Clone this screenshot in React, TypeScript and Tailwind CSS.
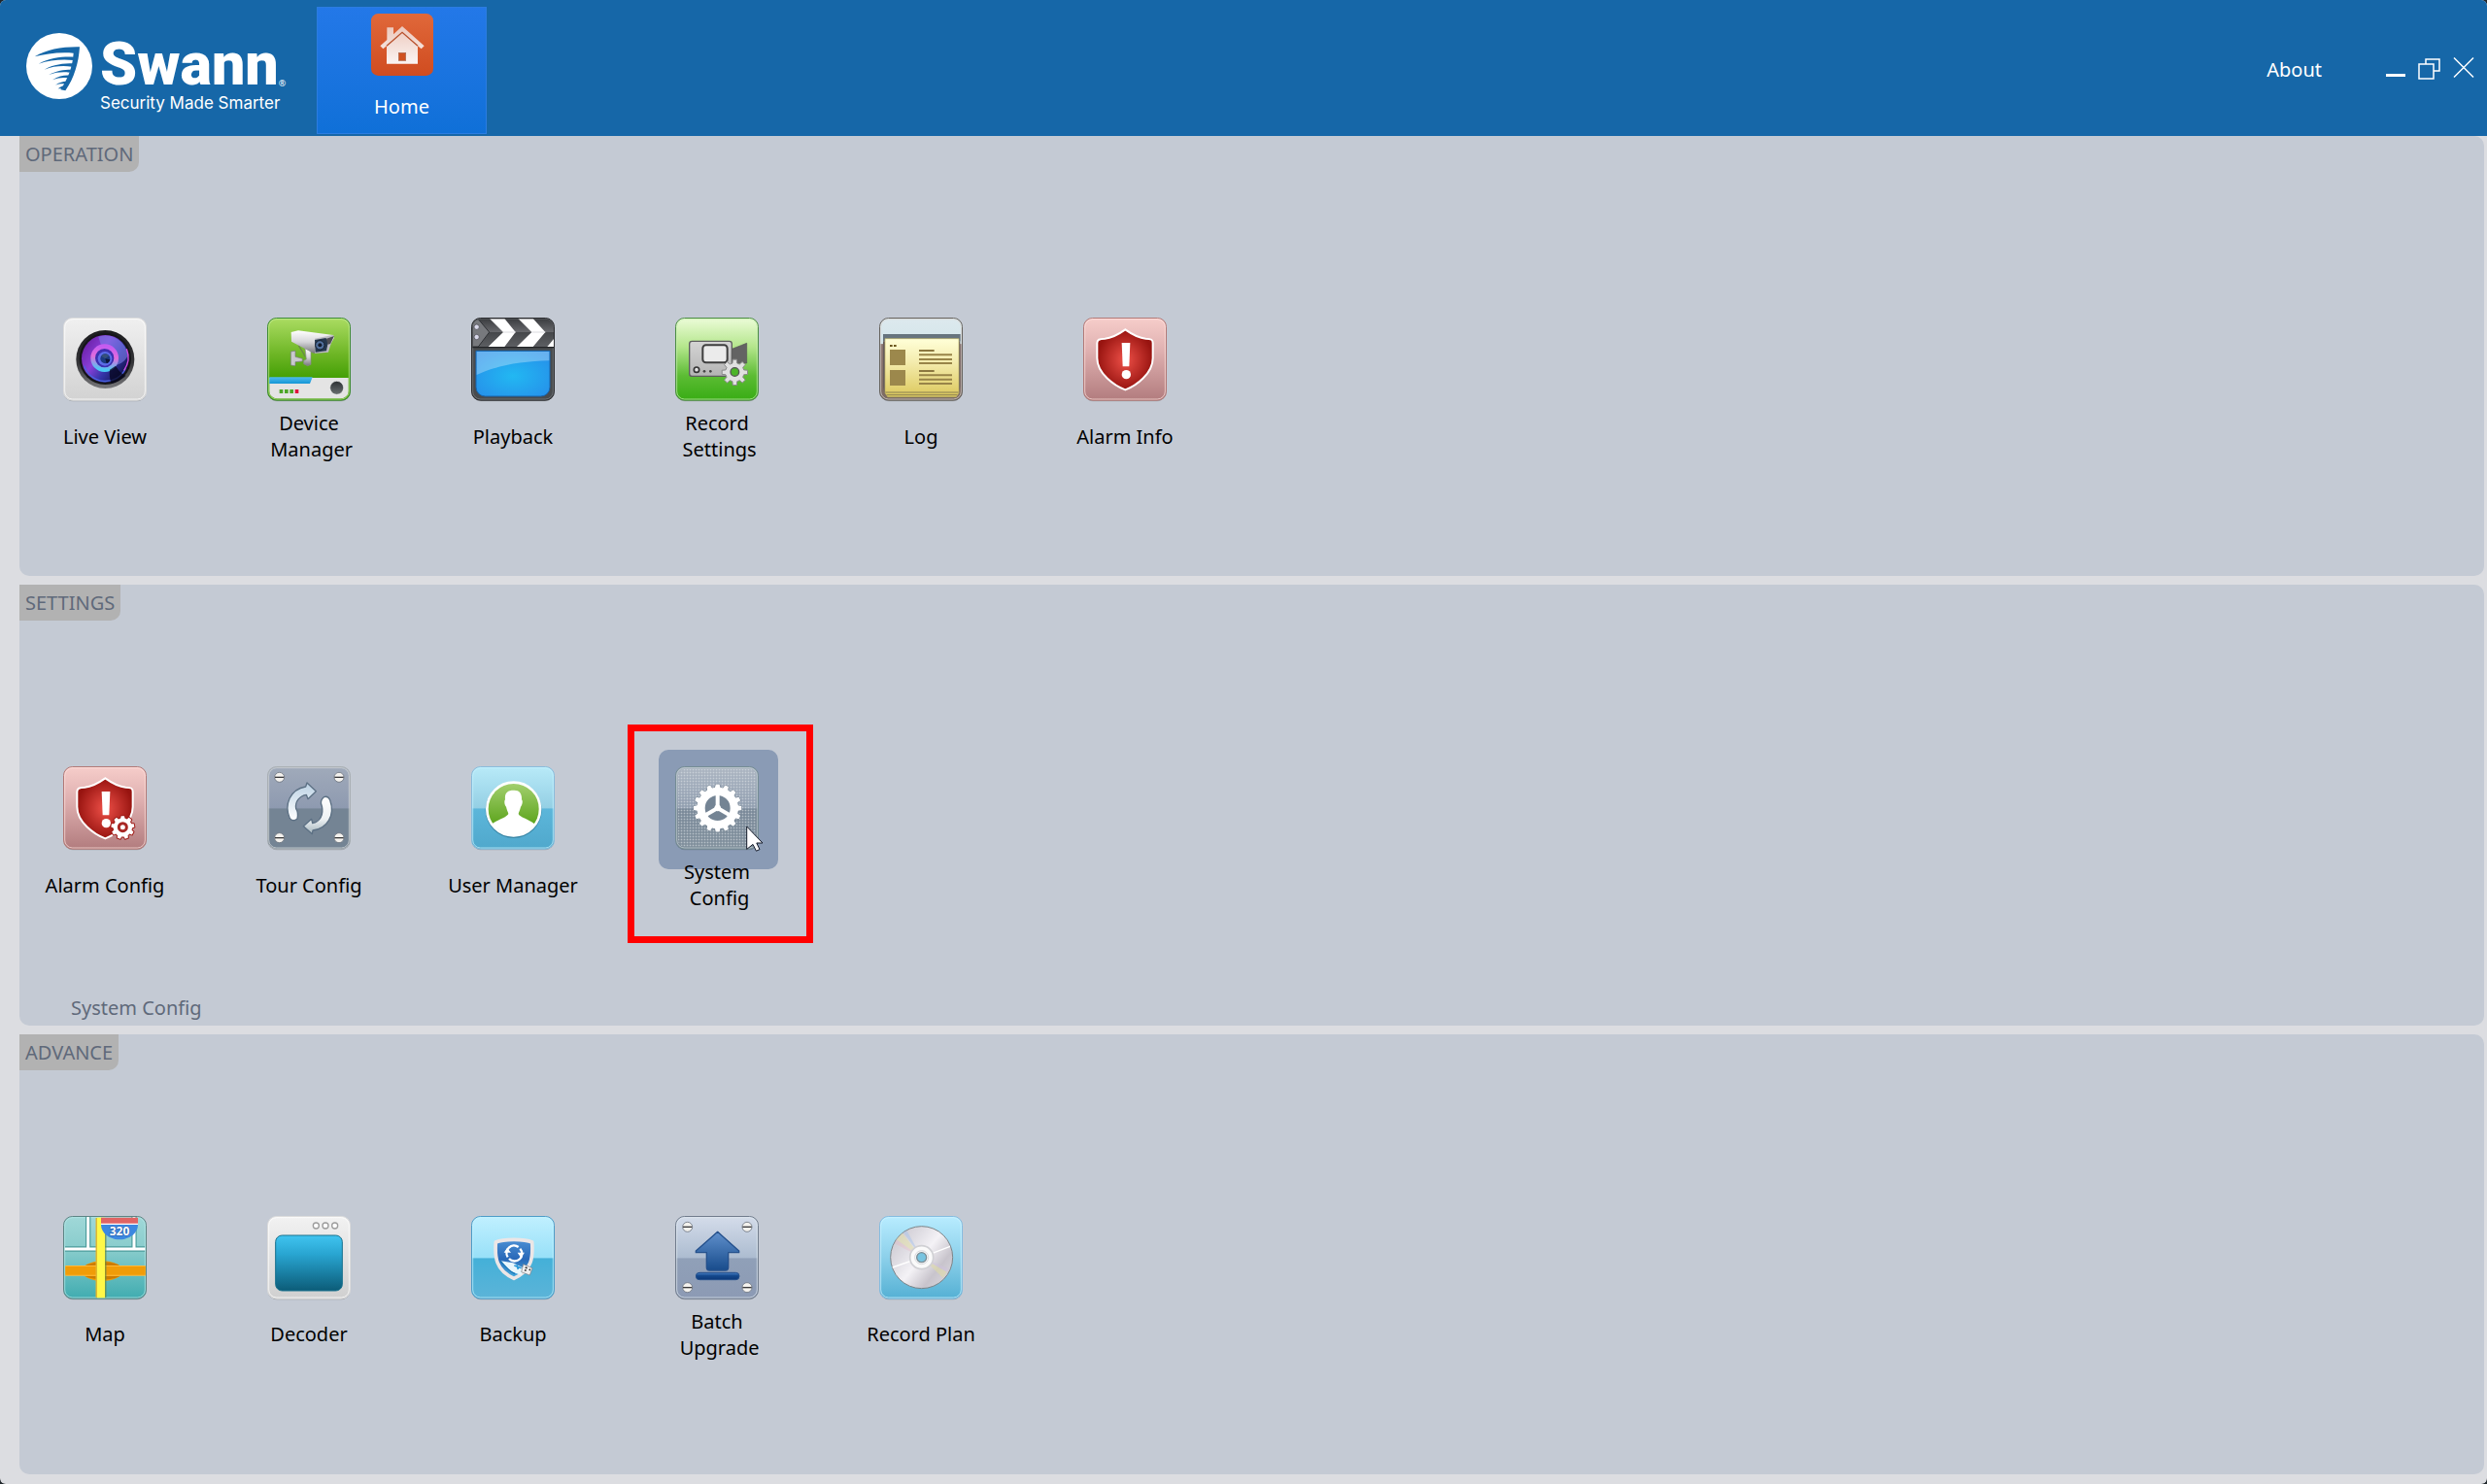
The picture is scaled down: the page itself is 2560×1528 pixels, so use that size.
import React from "react";

type IconProps = { children: React.ReactNode };

/* Every launcher icon is drawn on a 264-unit square canvas. */
function Icon({ children }: IconProps) {
  return (
    <svg viewBox="0 0 264 264" className="relative size-22 shrink-0" aria-hidden="true">
      {children}
    </svg>
  );
}

function Stops({ id, colors, radial }: { id: string; colors: [number, string][]; radial?: boolean }) {
  const stops = colors.map(([o, c], i) => <stop key={i} offset={o} stopColor={c} />);
  return radial ? (
    <radialGradient id={id}>{stops}</radialGradient>
  ) : (
    <linearGradient id={id} x1="0" y1="0" x2="0" y2="1">
      {stops}
    </linearGradient>
  );
}

function Plate({ fill, edge, rim = "#ffffff" }: { fill: string; edge: string; rim?: string }) {
  return (
    <>
      <rect x="5" y="8" width="254" height="254" rx="28" fill="#000" opacity="0.18" />
      <rect x="4.5" y="4.5" width="255" height="254" rx="27" fill={fill} stroke={edge} strokeWidth="3" />
      <rect x="8" y="8" width="248" height="247" rx="24" fill="none" stroke={rim} strokeWidth="3" opacity="0.7" />
    </>
  );
}

function gearPath(cx: number, cy: number, teeth: number, outer: number, inner: number, w = 0.26) {
  const pts: string[] = [];
  const step = (Math.PI * 2) / teeth;
  const at = (a: number, r: number) => `${(cx + r * Math.sin(a)).toFixed(1)} ${(cy - r * Math.cos(a)).toFixed(1)}`;
  for (let i = 0; i < teeth; i++) {
    const a = i * step;
    pts.push(at(a - step * (w + 0.06), inner), at(a - step * (w - 0.06), outer), at(a + step * (w - 0.06), outer), at(a + step * (w + 0.06), inner));
  }
  return `M${pts.join("L")}Z`;
}

function Screws() {
  return (
    <>
      {[[41, 37], [225, 37], [41, 224], [225, 224]].map(([x, y]) => (
        <g key={`${x}-${y}`}>
          <circle cx={x} cy={y} r="15" fill="#f4f2ee" stroke="#6d7580" strokeWidth="2.5" />
          <path d={`M${x - 14} ${y}h28`} stroke="#3c3c3e" strokeWidth="4" />
        </g>
      ))}
    </>
  );
}

function LiveViewIcon() {
  return (
    <Icon>
      <defs>
        <Stops id="lvPlate" colors={[[0, "#f0f0f0"], [1, "#d2d2d2"]]} />
        <Stops id="lvRing" colors={[[0, "#1c1c1e"], [0.55, "#333336"], [1, "#77777a"]]} />
        <linearGradient id="lvGlass" x1="0" y1="0.2" x2="1" y2="0.9">
          <stop offset="0" stopColor="#6a1fa6" />
          <stop offset="0.35" stopColor="#8a3fd8" />
          <stop offset="0.6" stopColor="#3334a8" />
          <stop offset="1" stopColor="#0a0a30" />
        </linearGradient>
        <linearGradient id="lvIris" x1="0.5" y1="0" x2="0.4" y2="1">
          <stop offset="0" stopColor="#c45cf0" />
          <stop offset="0.45" stopColor="#e26bdc" />
          <stop offset="1" stopColor="#4cc8f4" />
        </linearGradient>
      </defs>
      <Plate fill="url(#lvPlate)" edge="#dddddd" />
      <circle cx="133" cy="132" r="90" fill="url(#lvRing)" />
      <circle cx="133" cy="130" r="80" fill="#151519" />
      <circle cx="133" cy="130" r="73" fill="url(#lvGlass)" />
      <path d="M112 62c40-14 82 12 92 56-10 26-40 40-66 30z" fill="#7c7ee8" opacity="0.6" />
      <path d="M68 152a69 69 0 0 0 128 8" fill="none" stroke="#4a62e0" strokeWidth="4" />
      <path d="M199 100a70 70 0 0 1-8 66" fill="none" stroke="#d44ce0" strokeWidth="4" />
      <circle cx="131" cy="128" r="36" fill="#3c2fb0" stroke="url(#lvIris)" strokeWidth="14" />
      <path d="M165 152c12 18 20 26 32 30-12 12-30 22-46 24-4-16-6-28-4-42z" fill="#05061c" opacity="0.75" />
      <circle cx="132" cy="130" r="22" fill="#5c6ce8" />
      <circle cx="133" cy="130" r="15" fill="#1c3a80" />
      <path d="M133 130l-12-8a15 15 0 0 1 24-1z" fill="#35507a" />
      <path d="M133 130l4 15a15 15 0 0 0 11-12z" fill="#0b1438" />
    </Icon>
  );
}

function DeviceManagerIcon() {
  return (
    <Icon>
      <defs>
        <Stops id="dmPlate" colors={[[0, "#abdc62"], [0.45, "#6cb524"], [0.72, "#45a006"], [1, "#3f9808"]]} />
        <Stops id="dmBody" colors={[[0, "#ffffff"], [0.5, "#d6d6da"], [1, "#77777c"]]} />
        <Stops id="dmBar" colors={[[0, "#4dbbec"], [1, "#1596d6"]]} />
        <Stops id="dmKnob" colors={[[0, "#2c3032"], [1, "#6b7072"]]} />
      </defs>
      <Plate fill="url(#dmPlate)" edge="#3f8c34" rim="#c4ec98" />
      <path d="M10 189h244v41a23 23 0 0 1-23 23H33a23 23 0 0 1-23-23z" fill="#e4e4e4" />
      <path d="M10 187h133l-8 20H10z" fill="url(#dmBar)" />
      <rect x="41" y="225" width="11" height="12" fill="#4da628" />
      <rect x="57" y="225" width="11" height="12" fill="#4da628" />
      <rect x="73" y="225" width="11" height="12" fill="#4da628" />
      <rect x="89" y="225" width="11" height="12" fill="#e0143c" />
      <circle cx="218" cy="220" r="21" fill="url(#dmKnob)" stroke="#f8f8f8" strokeWidth="2" />
      <path d="M100 88c8 16 16 24 20 36" fill="none" stroke="#6a8a48" strokeWidth="4" />
      <path d="M76 108l14-2v18l22 6v8l-22 2v12l-14-2z" fill="#c9c9ce" stroke="#77777c" strokeWidth="2" />
      <path d="M120 98l18 8v42l-10 4-12-6v-10l8-4z" fill="url(#dmBody)" stroke="#88888c" strokeWidth="2" />
      <path d="M77 48l22-5 108 14 3 8-12 22-12 24-40 2-68-36z" fill="url(#dmBody)" />
      <path d="M150 68l58-12-16 54-42 3z" fill="#bcbcc2" />
      <path d="M150 72l34-6 8 10-6 30-34 4z" fill="#26384e" />
      <circle cx="166" cy="88" r="14" fill="#51709c" stroke="#15202e" strokeWidth="3" />
      <circle cx="166" cy="88" r="6" fill="#131c2c" />
      <path d="M186 68l24-8-12 24-8 2z" fill="#4e4e54" />
    </Icon>
  );
}

function PlaybackIcon() {
  return (
    <Icon>
      <defs>
        <radialGradient id="pbScreen" cx="0.5" cy="0.55" r="0.65">
          <stop offset="0" stopColor="#22b8f2" />
          <stop offset="1" stopColor="#2690ea" />
        </radialGradient>
        <Stops id="pbTop" colors={[[0, "#3a3c3f"], [0.48, "#68696d"], [0.5, "#46484b"], [1, "#5c5e62"]]} />
        <clipPath id="pbClip">
          <path d="M7 34A27 27 0 0 1 34 7h197a27 27 0 0 1 27 27v59H7z" />
        </clipPath>
      </defs>
      <Plate fill="#484b4e" edge="#2b2c2f" rim="#7a7d80" />
      <g clipPath="url(#pbClip)">
        <rect x="7" y="6" width="252" height="87" fill="url(#pbTop)" />
        <path d="M7 8h18l34 40-34 45H7z" fill="#77797d" stroke="#303236" strokeWidth="3" />
        <path d="M60 6h46l34 42-34 45H56l46-45z" fill="#fff" />
        <path d="M148 6h46l38 42-38 45h-50l46-45z" fill="#fff" />
        <path d="M238 93l22-26v26z" fill="#fff" />
        <path d="M102 48h38M190 48h42" stroke="#dcdce0" strokeWidth="3" />
      </g>
      <circle cx="20" cy="32" r="8" fill="#d8d8ea" stroke="#3c3d42" strokeWidth="2" />
      <circle cx="20" cy="63" r="8" fill="#d8d8ea" stroke="#3c3d42" strokeWidth="2" />
      <path d="M7 95h251" stroke="#232528" strokeWidth="4" />
      <path d="M18 106h228v112a28 28 0 0 1-28 28H46a28 28 0 0 1-28-28z" fill="url(#pbScreen)" stroke="#1767b0" strokeWidth="3" />
      <path d="M20 108h224v28C160 138 84 150 20 180z" fill="#fff" opacity="0.3" />
    </Icon>
  );
}

function RecordSettingsIcon() {
  return (
    <Icon>
      <defs>
        <Stops id="rsPlate" colors={[[0, "#ecfcd8"], [0.35, "#b4e68c"], [0.7, "#5cbc34"], [1, "#38ac14"]]} />
        <Stops id="rsBody" colors={[[0, "#d4d4d4"], [1, "#b4b4b4"]]} />
      </defs>
      <Plate fill="url(#rsPlate)" edge="#4c8c44" rim="#c8f0b0" />
      <path d="M178 100l46-18v62h-46z" fill="#636363" stroke="#555" strokeWidth="2" />
      <rect x="47" y="76" width="131" height="108" rx="8" fill="url(#rsBody)" stroke="#5e5e5e" strokeWidth="4" />
      <rect x="88" y="88" width="76" height="54" rx="10" fill="#ebebeb" stroke="#3e3e3e" strokeWidth="6" />
      <circle cx="69" cy="164" r="8" fill="#e4e4e4" stroke="#333" strokeWidth="5" />
      <circle cx="93" cy="169" r="4" fill="#444" />
      <circle cx="112" cy="169" r="4" fill="#444" />
      <path d={gearPath(187, 172, 8, 40, 29)} fill="#e0e0e0" stroke="#8a8a8a" strokeWidth="3" strokeLinejoin="round" />
      <circle cx="187" cy="171" r="13" fill="#4cb428" stroke="#555" strokeWidth="4" />
    </Icon>
  );
}

function LogIcon() {
  return (
    <Icon>
      <defs>
        <Stops id="lgPaper" colors={[[0, "#ffffd8"], [0.4, "#f4ecae"], [1, "#dcc85c"]]} />
        <Stops id="lgBack" colors={[[0, "#dde9ee"], [0.31, "#d4e6ea"], [0.32, "#8a7470"], [1, "#7c6a62"]]} />
      </defs>
      <Plate fill="url(#lgBack)" edge="#67645f" rim="#d8d4d0" />
      <rect x="15" y="54" width="239" height="22" fill="#67747e" />
      <path d="M15 76v140c2 16 8 28 14 34h208c8-6 14-16 16-34V76z" fill="#665c5c" />
      <path d="M21 68h228v168l-8 12H29l-8-12z" fill="url(#lgPaper)" stroke="#b8ac64" strokeWidth="2" />
      <path d="M22 234h226M26 242h218" stroke="#8a7f50" strokeWidth="3" />
      <rect x="36" y="87" width="8" height="6" fill="#6c5820" />
      <rect x="48" y="87" width="8" height="6" fill="#6c5820" />
      <rect x="36" y="102" width="48" height="48" fill="#9c884c" />
      <rect x="36" y="165" width="48" height="48" fill="#9c884c" />
      <path d="M126 105h47M126 168h47" stroke="#8c7840" strokeWidth="6" />
      <path d="M126 118h102M126 132h102M126 144h102M126 181h102M126 194h102M126 207h102" stroke="#988448" strokeWidth="6" />
    </Icon>
  );
}

function Shield({ id }: { id: string }) {
  return (
    <>
      <defs>
        <Stops id={`${id}Plate`} colors={[[0, "#f6cdca"], [0.4, "#dfb0b0"], [1, "#b27c7e"]]} />
        <Stops id={`${id}Fill`} radial colors={[[0, "#ee5048"], [1, "#981410"]]} />
      </defs>
      <Plate fill={`url(#${id}Plate)`} edge="#b27876" rim="#ffe4e0" />
      <path
        d="M133 40C150 52 174 66 196 68C214 69 218 71 218 82V128C218 176 166 214 133 226C100 214 46 176 46 128V82C46 71 52 69 70 68C92 66 116 52 133 40Z"
        fill={`url(#${id}Fill)`}
        stroke="#fff"
        strokeWidth="6"
      />
      <path d="M122 81h26l-3 73h-20z" fill="#fff" />
      <circle cx="136" cy="179" r="14" fill="#fff" />
    </>
  );
}

function AlarmInfoIcon() {
  return (
    <Icon>
      <Shield id="ai" />
    </Icon>
  );
}

function AlarmConfigIcon() {
  return (
    <Icon>
      <Shield id="ac" />
      <path d={gearPath(187, 192, 9, 36, 29)} fill="#fff" stroke="#a01c18" strokeWidth="6" paintOrder="stroke" strokeLinejoin="round" />
      <circle cx="187" cy="191" r="12" fill="#fff" stroke="#a82824" strokeWidth="9" />
    </Icon>
  );
}

function SplitPlateDefs({ id, c }: { id: string; c: [string, string, string, string] }) {
  return <Stops id={id} colors={[[0, c[0]], [0.505, c[1]], [0.51, c[2]], [1, c[3]]]} />;
}

function TourConfigIcon() {
  return (
    <Icon>
      <defs>
        <SplitPlateDefs id="tcPlate" c={["#a0aaba", "#8e9ab0", "#748494", "#748494"]} />
        <Stops id="tcA" colors={[[0, "#bcd2e4"], [1, "#ffffff"]]} />
        <Stops id="tcB" colors={[[0, "#ffffff"], [0.6, "#eef2f4"], [1, "#a4b4bc"]]} />
      </defs>
      <Plate fill="url(#tcPlate)" edge="#aab0b4" rim="#d8dcdc" />
      <Screws />
      <path
        d="M126 54L154 80L129 104L124 91C104 94 88 112 92 134C98 142 99 151 96 165C88 172 78 172 73 164C54 122 74 74 122 66Z"
        fill="url(#tcA)"
        stroke="#5c7084"
        strokeWidth="4"
        strokeLinejoin="round"
      />
      <path
        d="M142 212L115 188L140 166L143 179C166 174 178 154 172 126C166 116 170 104 178 98C187 95 194 100 197 107C214 154 188 196 144 201Z"
        fill="url(#tcB)"
        stroke="#5c7084"
        strokeWidth="4"
        strokeLinejoin="round"
      />
    </Icon>
  );
}

function UserManagerIcon() {
  return (
    <Icon>
      <defs>
        <SplitPlateDefs id="umPlate" c={["#b8eaf8", "#94cfe4", "#5cb6da", "#50a8cc"]} />
        <Stops id="umDisc" colors={[[0, "#a4d070"], [0.8, "#5ca41c"], [1, "#5ca41c"]]} />
        <clipPath id="umClip">
          <circle cx="134" cy="135" r="80" />
        </clipPath>
      </defs>
      <Plate fill="url(#umPlate)" edge="#88bcdc" rim="#c8f4ff" />
      <circle cx="134" cy="138" r="87" fill="#286c88" opacity="0.6" />
      <circle cx="134" cy="135" r="82" fill="url(#umDisc)" stroke="#fff" strokeWidth="8" />
      <path
        clipPath="url(#umClip)"
        d="M134 77C152 76 160 86 159 106C164 110 160 124 156 128C154 138 150 144 149 150C152 160 180 166 200 182V220H66V182C88 166 114 160 118 150C117 144 113 138 111 128C106 124 104 110 108 106C106 86 114 77 134 77Z"
        fill="#fff"
      />
    </Icon>
  );
}

function SystemConfigIcon() {
  return (
    <Icon>
      <defs>
        <SplitPlateDefs id="scPlate" c={["#aab4c0", "#8c9aac", "#748494", "#7c8c98"]} />
        <pattern id="scDots" width="9" height="9" patternUnits="userSpaceOnUse">
          <rect x="2" y="2" width="5" height="5" fill="#dfe5ea" opacity="0.6" />
        </pattern>
      </defs>
      <Plate fill="url(#scPlate)" edge="#748c94" rim="#c4d0d4" />
      <rect x="12" y="12" width="240" height="239" rx="20" fill="url(#scDots)" />
      <path d={gearPath(134, 132, 16, 74, 64)} fill="#fff" stroke="#6c7c8c" strokeWidth="3" paintOrder="stroke" strokeLinejoin="round" />
      <circle cx="134" cy="132" r="39" fill="#748494" />
      <path d="M134 132V90M134 132L98 153M134 132L170 153" stroke="#fff" strokeWidth="12" />
      <circle cx="134" cy="132" r="10" fill="#fff" />
    </Icon>
  );
}

function MapIcon() {
  return (
    <Icon>
      <defs>
        <Stops id="mpPlate" colors={[[0, "#a0d8d8"], [0.4, "#88cccc"], [1, "#40acb0"]]} />
      </defs>
      <Plate fill="url(#mpPlate)" edge="#5c8484" rim="#b8e8e8" />
      <path d="M80 6v98M222 6v98M9 105h246" stroke="#4c9c9c" strokeWidth="16" />
      <path d="M80 6v98M222 6v98M8 105h248" stroke="#fff" strokeWidth="9" />
      <ellipse cx="124" cy="173" rx="62" ry="31" fill="#f09c08" />
      <path d="M70 157c30-16 84-16 108 0zM70 189c30 14 84 14 108 0z" fill="#cc7c00" />
      <path d="M10 172h247" stroke="#ffb838" strokeWidth="32" />
      <path d="M10 172h247" stroke="#f09c08" strokeWidth="26" />
      <path d="M134 9v246" stroke="#6a8a40" strokeWidth="5" opacity="0.7" />
      <path d="M106 9v246" stroke="#e0b830" strokeWidth="5" />
      <path d="M120 8v248" stroke="#fff848" strokeWidth="24" />
      <path d="M120 8h114v20H120z" fill="#e06464" />
      <path d="M120 26h114v4H120z" fill="#fff" />
      <path d="M120 30h114c0 26-26 46-57 46s-57-20-57-46z" fill="#3c88e0" />
      <text x="177" y="62" textAnchor="middle" fill="#fff" stroke="#2454a0" strokeWidth="3" paintOrder="stroke" className="font-['Open_Sans',sans-serif] text-[36px] font-bold">
        320
      </text>
    </Icon>
  );
}

function DecoderIcon() {
  return (
    <Icon>
      <defs>
        <Stops id="dcPlate" colors={[[0, "#f2f2f2"], [1, "#d0d0d0"]]} />
        <Stops id="dcScreen" colors={[[0, "#40c4f0"], [0.35, "#28a4d0"], [1, "#0c5c78"]]} />
      </defs>
      <Plate fill="url(#dcPlate)" edge="#dcdcdc" />
      {[154, 183, 212].map((x) => (
        <circle key={x} cx={x} cy="33" r="9" fill="#fff" stroke="#9c9c9c" strokeWidth="4" />
      ))}
      <rect x="29" y="63" width="206" height="171" rx="20" fill="url(#dcScreen)" stroke="#18708c" strokeWidth="3" />
    </Icon>
  );
}

function BackupIcon() {
  return (
    <Icon>
      <defs>
        <SplitPlateDefs id="bkPlate" c={["#c0f0ff", "#98e0f8", "#44b0d8", "#5cb4d8"]} />
        <Stops id="bkShield" colors={[[0, "#4c90d4"], [0.5, "#2868b8"], [1, "#48b0e0"]]} />
      </defs>
      <Plate fill="url(#bkPlate)" edge="#4c9cc8" rim="#c4f4ff" />
      <path
        d="M135 76C154 76 178 78 191 84C194 130 192 170 135 196C78 170 76 130 79 84C92 78 116 76 135 76Z"
        fill="url(#bkShield)"
        stroke="#ece6e6"
        strokeWidth="11"
        strokeLinejoin="round"
      />
      <path d="M116 130a23 23 0 0 1 33-31M154 104a23 23 0 0 1-34 31" fill="none" stroke="#fff" strokeWidth="7" />
      <path d="M104 116l10-14 12 14zM146 116l10 15 12-15z" fill="#fff" />
      <path d="M94 142l38 6 34 16-8 22-34-12z" fill="#e8f6fc" />
      <path d="M94 142c14 18 32 34 44 40" fill="none" stroke="#1c78b8" strokeWidth="4" />
      <path d="M136 156l22 8M144 154l4 14" stroke="#2898d8" strokeWidth="5" />
      <path d="M164 152l28 12-8 22-26-10z" fill="#f0f0f0" stroke="#7c7c84" strokeWidth="2" />
      <path d="M170 162l6 2M168 170l5 2M182 168l4 2" stroke="#333" strokeWidth="5" />
    </Icon>
  );
}

function BatchUpgradeIcon() {
  return (
    <Icon>
      <defs>
        <SplitPlateDefs id="buPlate" c={["#d4dcea", "#acbcd0", "#90a0b8", "#8c9ab4"]} />
        <Stops id="buArrow" colors={[[0, "#6090cc"], [1, "#184c8c"]]} />
        <Stops id="buBar" colors={[[0, "#4880c4"], [0.45, "#14488c"], [1, "#0c3878"]]} />
      </defs>
      <Plate fill="url(#buPlate)" edge="#707c8c" rim="#e0e8f0" />
      <Screws />
      <path d="M134 52L200 111V116H167V162Q167 171 158 171H109Q100 171 100 162V116H67V111Z" fill="url(#buArrow)" stroke="#24508c" strokeWidth="4" strokeLinejoin="round" />
      <rect x="67" y="178" width="134" height="22" rx="11" fill="url(#buBar)" stroke="#24508c" strokeWidth="3" />
    </Icon>
  );
}

function RecordPlanIcon() {
  return (
    <Icon>
      <defs>
        <Stops id="rpPlate" colors={[[0, "#b8ecff"], [0.5, "#8cd0ea"], [1, "#54b0d4"]]} />
        <linearGradient id="rpDisc" x1="0" y1="0.1" x2="1" y2="0.9">
          <stop offset="0" stopColor="#c8c4cc" />
          <stop offset="0.3" stopColor="#e0dee4" />
          <stop offset="0.5" stopColor="#f4f2f6" />
          <stop offset="0.75" stopColor="#c8c4cc" />
          <stop offset="1" stopColor="#dcdae0" />
        </linearGradient>
      </defs>
      <Plate fill="url(#rpPlate)" edge="#84bce0" rim="#d0f4ff" />
      <circle cx="134" cy="131" r="96" fill="url(#rpDisc)" stroke="#7c8488" strokeWidth="3" />
      <path d="M134 131L56 76L74 56Z" fill="#e4e0a8" opacity="0.55" />
      <path d="M134 131L50 88L56 76Z" fill="#e8b8c0" opacity="0.35" />
      <path d="M134 131L78 54L88 48Z" fill="#a8c4ec" opacity="0.5" />
      <path d="M134 131L212 176L200 194Z" fill="#e0dca4" opacity="0.55" />
      <path d="M134 131L218 166L212 176Z" fill="#d0c0e0" opacity="0.4" />
      <path d="M134 131L222 97M134 131L44 162" stroke="#fff" strokeWidth="4" />
      <circle cx="134" cy="131" r="36" fill="#fafafa" stroke="#d0d0d4" strokeWidth="5" />
      <circle cx="134" cy="131" r="21" fill="none" stroke="#d8d8dc" strokeWidth="3" />
      <circle cx="134" cy="131" r="15" fill="#78c4e0" stroke="#7c8c94" strokeWidth="4" />
    </Icon>
  );
}

type Tile = { label: string; icon: () => React.ReactElement; active?: boolean };

const groups: { title: string; status?: string; tiles: Tile[] }[] = [
  {
    title: "OPERATION",
    tiles: [
      { label: "Live View", icon: LiveViewIcon },
      { label: "Device\n Manager", icon: DeviceManagerIcon },
      { label: "Playback", icon: PlaybackIcon },
      { label: "Record\n Settings", icon: RecordSettingsIcon },
      { label: "Log", icon: LogIcon },
      { label: "Alarm Info", icon: AlarmInfoIcon },
    ],
  },
  {
    title: "SETTINGS",
    status: "System Config",
    tiles: [
      { label: "Alarm Config", icon: AlarmConfigIcon },
      { label: "Tour Config", icon: TourConfigIcon },
      { label: "User Manager", icon: UserManagerIcon },
      { label: "System\n Config", icon: SystemConfigIcon, active: true },
    ],
  },
  {
    title: "ADVANCE",
    tiles: [
      { label: "Map", icon: MapIcon },
      { label: "Decoder", icon: DecoderIcon },
      { label: "Backup", icon: BackupIcon },
      { label: "Batch\n Upgrade", icon: BatchUpgradeIcon },
      { label: "Record Plan", icon: RecordPlanIcon },
    ],
  },
];

function TileButton({ label, icon: Glyph, active }: Tile) {
  return (
    <button type="button" className="relative flex w-[140px] flex-col items-center gap-2">
      {active && <span className="absolute -top-4 left-2.5 size-[123px] rounded-[10px] bg-[#8a9bb5]" />}
      <Glyph />
      <span className="relative flex h-[54px] items-center text-center leading-[27px] whitespace-pre text-black">{label}</span>
      {active && (
        <>
          <span className="absolute -top-[42px] -left-[22px] h-[225px] w-[191px] border-7 border-[#ff0000]" />
          <svg viewBox="0 0 18 27" className="absolute top-[62px] left-[100px] h-[27px] w-[18px]" aria-hidden="true">
            <path d="M.7 1L17 18H10.8L14 24.6L10.4 26.2L7 19.4L.7 24.4Z" fill="#fff" stroke="#111827" />
          </svg>
        </>
      )}
    </button>
  );
}

function Logo() {
  return (
    <div className="flex items-start gap-2 pt-[34px] pl-[27px] text-white">
      <svg viewBox="0 0 204 204" className="size-[68px]" aria-hidden="true">
        <circle cx="102" cy="102" r="102" fill="#fff" />
        <g fill="#1667a8">
          <path d="M26 73C64 50 112 42 165 43C162 92 148 140 121 178L106 175C128 142 143 106 146 62C104 58 60 64 26 73Z" />
          <path d="M38 95C74 76 114 72 148 74L146 84C110 80 72 84 38 95Z" />
          <path d="M56 113C84 97 114 94 146 94L142 104C112 100 84 102 56 113Z" />
          <path d="M70 129C94 116 116 113 138 113L134 122C112 120 92 121 70 129Z" />
          <path d="M81 145C100 134 116 130 132 131L128 139C112 137 98 139 81 145Z" />
          <path d="M90 161C102 152 114 149 124 149L120 157C110 156 100 157 90 161Z" />
          <path d="M98 172C106 166 112 164 120 163L114 172Z" />
        </g>
      </svg>
      <div className="flex flex-col">
        <div className="flex items-end pt-0.5">
          <span className="font-['Roboto',sans-serif] text-[61px] leading-[60px] font-black">Swann</span>
          <span className="pb-1 text-[9px] leading-3">®</span>
        </div>
        <span className="font-['Inter',sans-serif] text-[17px] leading-5">Security Made Smarter</span>
      </div>
    </div>
  );
}

export default function App() {
  return (
    <div className="bg-[#20272b] font-['Noto_Sans','Open_Sans',sans-serif] text-[20px] leading-[27px]">
      <div className="flex min-h-screen flex-col overflow-hidden rounded-md bg-[#dcdde1]">
        <header className="flex h-[140px] shrink-0 bg-[#1667a8] text-white">
          <div className="w-[326px]">
            <Logo />
          </div>
          <nav className="pt-[7px]">
            <button type="button" className="flex h-[131px] w-[175px] flex-col items-center border border-[#2c7ce0] bg-linear-to-b from-[#2378e8] to-[#0f70d8] pt-1.5">
              <svg viewBox="0 0 192 192" className="size-16" aria-hidden="true">
                <defs>
                  <Stops id="hmPlate" colors={[[0, "#e0683a"], [1, "#d04c20"]]} />
                  <Stops id="hmHouse" colors={[[0, "#ecc8bc"], [1, "#fbf4f2"]]} />
                </defs>
                <rect width="192" height="192" rx="22" fill="url(#hmPlate)" />
                <path d="M49 43H69V64L96 39L164 100L155 109L144 100V155H48V100L37 109L28 100L49 81Z" fill="url(#hmHouse)" />
                <path d="M48 100L96 58L144 100" fill="none" stroke="#b8502c" strokeWidth="4" />
                <rect x="85" y="121" width="22" height="24" fill="#d0501f" stroke="#a86850" strokeWidth="2" />
              </svg>
              <span className="mt-[18px]">Home</span>
            </button>
          </nav>
          <div className="ml-auto flex items-start pt-[58px] pr-3">
            <button type="button" className="mr-16 leading-[27px]">About</button>
            <div className="flex gap-[11px]">
              <button type="button" aria-label="Minimize" className="size-6">
                <svg viewBox="0 0 24 24" aria-hidden="true">
                  <path d="M2 19.5h20" stroke="#fff" strokeWidth="3" />
                </svg>
              </button>
              <button type="button" aria-label="Restore" className="size-6">
                <svg viewBox="0 0 24 24" fill="none" stroke="#fff" strokeWidth="1.5" aria-hidden="true">
                  <path d="M1 8h15v15H1zM8 8V3h14v12h-6" />
                </svg>
              </button>
              <button type="button" aria-label="Close" className="size-6">
                <svg viewBox="0 0 24 24" stroke="#fff" strokeWidth="1.5" aria-hidden="true">
                  <path d="M2 1.5l20 20M22 1.5l-20 20" />
                </svg>
              </button>
            </div>
          </div>
        </header>

        <main className="grid flex-1 auto-rows-fr gap-[9px] pr-[3px] pb-2.5 pl-5">
          {groups.map((g) => (
            <section key={g.title} className="flex flex-col rounded-[10px] rounded-tl-none bg-[#c4cad4] text-[#5f697a]">
              <h2 className="h-[37px] self-start rounded-br-[10px] bg-[#b2b2b2] px-1.5 leading-[37px]">{g.title}</h2>
              <div className="flex gap-[70px] pt-[149px] pl-[18px]">
                {g.tiles.map((t) => (
                  <TileButton key={t.label} {...t} />
                ))}
              </div>
              {g.status && <p className="mt-auto pb-[5px] pl-[53px]">{g.status}</p>}
            </section>
          ))}
        </main>
      </div>
    </div>
  );
}
